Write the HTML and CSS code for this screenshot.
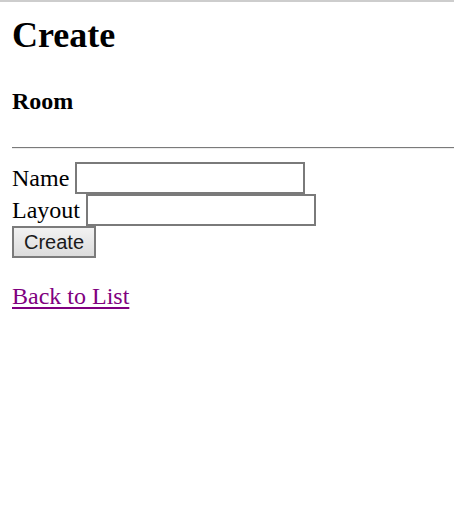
FILE: index.html
```html
<!DOCTYPE html>
<html>
<head>
<meta charset="utf-8">
<title>Create</title>
<link rel="stylesheet" href="styles.css">
</head>
<body>
<div class="topbar"></div>
<main class="page">
  <h2 class="title">Create</h2>
  <form class="form">
    <h4 class="subtitle">Room</h4>
    <hr class="rule">
    <div class="row">
      <label class="label" for="name">Name</label>
      <input class="field" id="name" type="text">
    </div>
    <div class="row">
      <label class="label" for="layout">Layout</label>
      <input class="field" id="layout" type="text">
    </div>
    <div class="row">
      <button class="button" type="button">Create</button>
    </div>
  </form>
  <p class="back"><a class="link" href="#">Back to List</a></p>
</main>
</body>
</html>
```

FILE: styles.css
```css
html, body {
  margin: 0;
  padding: 0;
  background: #ffffff;
}

body {
  font-family: "Liberation Serif", "Times New Roman", serif;
  font-size: 24px;
  color: #000000;
}

.topbar {
  height: 2px;
  background: #cdcdcd;
}

.page {
  padding-left: 12px;
}

.title {
  font-size: 36px;
  font-weight: bold;
  margin: 12px 0 0;
  line-height: normal;
}

.form {
  margin: 0;
}

.subtitle {
  font-size: 24px;
  font-weight: bold;
  margin: 32px 0 32px;
  line-height: normal;
}

.rule {
  margin: 0 0 13px;
  height: 0;
  border: 0;
  border-top: 1px solid #7a7a7a;
  border-bottom: 1px solid #ececec;
}

.row {
  display: flex;
  align-items: center;
  gap: 6px;
  height: 32px;
}

.label {
  line-height: normal;
}

.field {
  box-sizing: border-box;
  width: 230px;
  height: 32px;
  margin: 0;
  border: 2px solid #7a7a7a;
  background: #ffffff;
  padding: 2px 3px;
  font-family: "Liberation Sans", Arial, sans-serif;
  font-size: 20px;
}

.button {
  box-sizing: border-box;
  height: 32px;
  margin: 0;
  padding: 0 10px;
  border: 2px solid #7b7b7b;
  background: linear-gradient(#f2f2f2, #dcdcdc);
  font-family: "Liberation Sans", Arial, sans-serif;
  font-size: 20px;
  color: #1a1a1a;
  line-height: 1;
}

.back {
  margin: 25px 0;
}

.link {
  color: #800080;
  text-decoration: underline;
  text-decoration-thickness: 2px;
  text-underline-offset: 3px;
}
```
